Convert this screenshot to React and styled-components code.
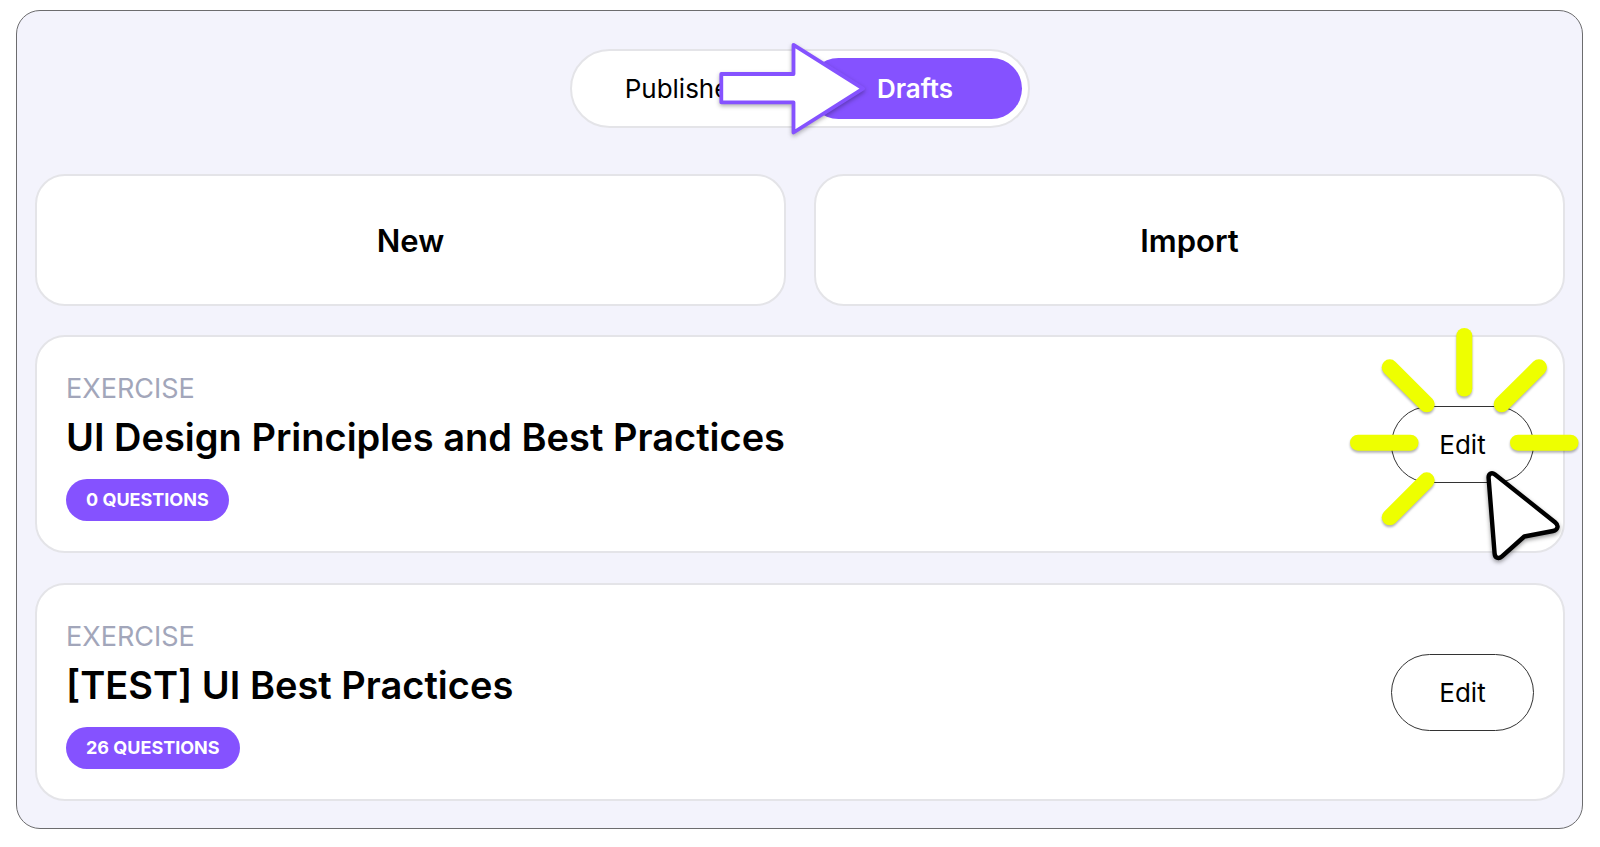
import { useState } from "react";
import styled, { createGlobalStyle } from "styled-components";

const GlobalStyle = createGlobalStyle`
  * {
    box-sizing: border-box;
  }
  body {
    margin: 0;
    background-color: #fff;
    color: #000;
    font-family: Inter, "Liberation Sans", sans-serif;
  }
  button {
    font-family: inherit;
    color: inherit;
    cursor: pointer;
  }
`;

const Frame = styled.main`
  margin: 10px 17px 10px 16px;
  padding: 38px 17px 27px 18px;
  display: flex;
  flex-direction: column;
  gap: 29px;
  background-color: #f3f3fc;
  border: 1px solid #6c6c6e;
  border-radius: 24px;
`;
const Tabs = styled.div`
  position: relative;
  align-self: center;
  display: flex;
  gap: 16px;
  margin-bottom: 17px;
  padding: 7px 6px;
  background-color: white;
  border: 2px solid #e4e4e8;
  border-radius: 40px;
`;
const Tab = styled.button`
  min-width: 214px;
  height: 61px;
  border: none;
  border-radius: 31px;
  background-color: ${(props) => (props.$active ? "#8552ff" : "transparent")};
  color: ${(props) => (props.$active ? "white" : "black")};
  font-size: 26px;
  font-weight: ${(props) => (props.$active ? 600 : 400)};
`;
const TabArrow = styled.svg`
  position: absolute;
  left: 139px;
  top: -17px;
  overflow: visible;
  pointer-events: none;
  filter: drop-shadow(0 2px 2px rgba(0, 0, 0, 0.3));
`;
const Actions = styled.div`
  display: grid;
  grid-template-columns: 1fr 1fr;
  gap: 28px;
`;
const Action = styled.button`
  height: 132px;
  background-color: white;
  border: 2px solid #e4e4e8;
  border-radius: 30px;
  font-size: 31px;
  font-weight: 600;
`;
const List = styled.section`
  display: flex;
  flex-direction: column;
  gap: 30px;
`;
const Card = styled.article`
  display: flex;
  align-items: center;
  justify-content: space-between;
  padding: 30px 29px;
  background-color: white;
  border: 2px solid #e4e4e8;
  border-radius: 30px;
`;
const Kind = styled.div`
  color: #a2a6ba;
  font-size: 27px;
  line-height: 44px;
`;
const Title = styled.h2`
  margin: 0 0 16px;
  font-size: 38px;
  font-weight: 600;
  line-height: 52px;
`;
const Badge = styled.span`
  display: inline-block;
  padding: 0 20px;
  background-color: #8552ff;
  border-radius: 21px;
  color: white;
  font-size: 18px;
  font-weight: 700;
  line-height: 42px;
  vertical-align: top;
`;
const EditWrapper = styled.div`
  position: relative;
`;
const EditButton = styled.button`
  display: block;
  width: 143px;
  height: 77px;
  background-color: white;
  border: 1px solid #333;
  border-radius: 39px;
  font-size: 26px;
`;
const ClickMark = styled.svg`
  position: absolute;
  left: -47px;
  top: -86px;
  overflow: visible;
  pointer-events: none;
`;
const Rays = styled.g`
  stroke: #eeff00;
  stroke-width: 16px;
  stroke-linecap: round;
  filter: drop-shadow(0 2px 1px rgba(0, 0, 0, 0.3));
`;
const Cursor = styled.path`
  fill: white;
  stroke: black;
  stroke-width: 4.4px;
  stroke-linejoin: round;
  filter: drop-shadow(0 2px 2px rgba(0, 0, 0, 0.4));
`;

const EXERCISES = [
  {
    id: 1,
    title: "UI Design Principles and Best Practices",
    questions: 0,
    highlighted: true,
  },
  { id: 2, title: "[TEST] UI Best Practices", questions: 26 },
];

function Exercise({ title, questions, highlighted }) {
  return (
    <Card>
      <div>
        <Kind>EXERCISE</Kind>
        <Title>{title}</Title>
        <Badge>{questions} QUESTIONS</Badge>
      </div>
      <EditWrapper>
        <EditButton type="button">Edit</EditButton>
        {highlighted && (
          <ClickMark width="240" height="250" viewBox="0 0 240 250" aria-hidden="true">
            <Rays>
              <path d="M120.3 16V68.5" />
              <path d="M14 122.7H66.5" />
              <path d="M174 122.7H226.5" />
              <path d="M45.7 47.3L82.7 84.3" />
              <path d="M195 47.3L157.7 84.3" />
              <path d="M82.7 160.3L45.7 197.3" />
            </Rays>
            <Cursor d="M144.6 158L150.6 233.5C151 238 154.5 239.5 158 236.3L180.3 216.5L209 211C214 210 215 205.5 211.3 202.5L151 154.5C147.5 151.8 144.3 154 144.6 158Z" />
          </ClickMark>
        )}
      </EditWrapper>
    </Card>
  );
}

function App() {
  const [tab, setTab] = useState("Drafts");
  return (
    <>
      <GlobalStyle />
      <Frame>
        <Tabs>
          {["Published", "Drafts"].map((name) => (
            <Tab
              key={name}
              type="button"
              $active={tab === name}
              aria-pressed={tab === name}
              onClick={() => setTab(name)}
            >
              {name}
            </Tab>
          ))}
          <TabArrow width="160" height="110" viewBox="0 0 160 110" aria-hidden="true">
            <path
              d="M10.3 40H82.5V10.8L152 54.7L82.5 98.5V68.3H10.3Z"
              fill="white"
              stroke="#8552ff"
              strokeWidth="3.8"
              strokeLinejoin="round"
            />
          </TabArrow>
        </Tabs>
        <Actions>
          <Action type="button">New</Action>
          <Action type="button">Import</Action>
        </Actions>
        <List>
          {EXERCISES.map((exercise) => (
            <Exercise key={exercise.id} {...exercise} />
          ))}
        </List>
      </Frame>
    </>
  );
}

export default App;
